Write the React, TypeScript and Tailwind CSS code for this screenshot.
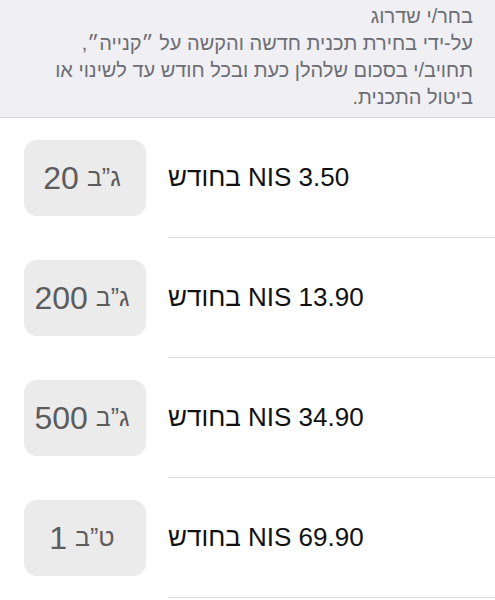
const plans = [
  { unit: 'ג”ב', amount: '20', price: 'NIS 3.50 בחודש' },
  { unit: 'ג”ב', amount: '200', price: 'NIS 13.90 בחודש' },
  { unit: 'ג”ב', amount: '500', price: 'NIS 34.90 בחודש' },
  { unit: 'ט”ב', amount: '1', price: 'NIS 69.90 בחודש' },
];

export default function App() {
  return (
    <div className="w-[495px] h-[600px] overflow-hidden bg-white font-['Liberation_Sans','DejaVu_Sans',sans-serif]">
      {/* Header note */}
      <div
        dir="rtl"
        className="h-[118px] bg-[#efeff4] border-b border-[#d6d6da] pr-[22px] pl-4 pt-[3px] text-[20px] leading-[27px] text-[#6d6d72]"
      >
        <p>בחר/י שדרוג</p>
        <p>
          על-ידי בחירת תכנית חדשה והקשה על ״קנייה״,
          <br />
          תחויב/י בסכום שלהלן כעת ובכל חודש עד לשינוי או
          <br />
          ביטול התכנית.
        </p>
      </div>

      {/* Plans */}
      <div className="flex flex-col">
        {plans.map((p) => (
          <div key={p.price} className="flex h-[120px]">
            <div className="w-[168px] pl-6 flex items-center">
              <div
                dir="rtl"
                className="w-[122px] h-[76px] rounded-[13px] bg-[#ebebeb] flex items-center justify-center gap-[8px] pr-[6px] text-[#5c5c5c]"
              >
                <span className="text-[25px]">{p.unit}</span>
                <span className="text-[32px]">{p.amount}</span>
              </div>
            </div>
            <div className="flex-1 flex items-center border-b border-[#dcdcdc]">
              <span dir="rtl" className="text-[26px] text-[#111111]">
                {p.price}
              </span>
            </div>
          </div>
        ))}
      </div>
    </div>
  );
}
